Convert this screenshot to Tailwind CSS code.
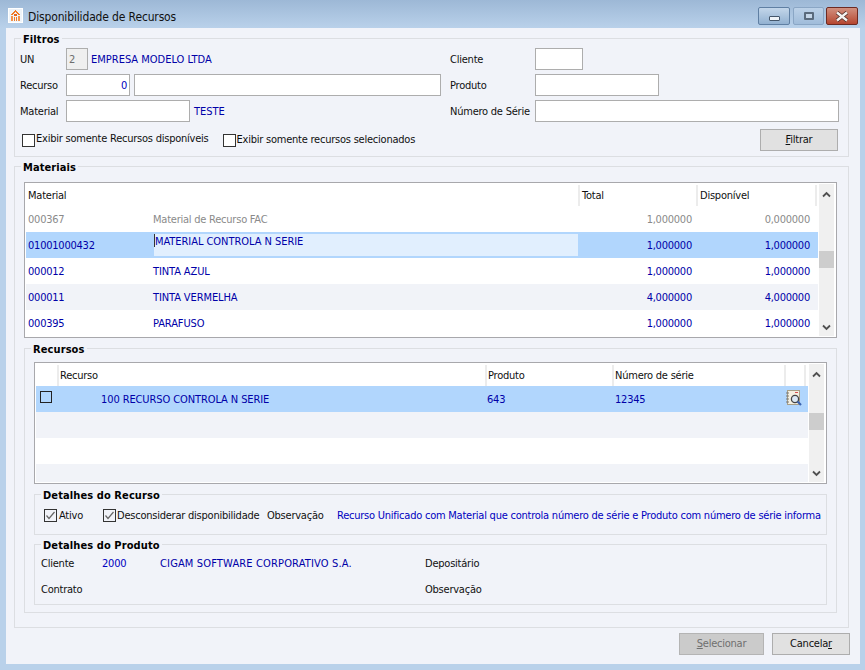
<!DOCTYPE html>
<html lang="pt-BR">
<head>
  <meta charset="UTF-8" />
  <title>Disponibilidade de Recursos</title>
  <script src="https://cdn.jsdelivr.net/npm/@tailwindcss/browser@4"></script>
</head>
<body class="bg-[#b9d1ea] overflow-hidden">
<div class="w-[865px] h-[670px] flex flex-col font-['DejaVu_Sans_Condensed','Noto_Sans',sans-serif] text-[11px] leading-[14px] tracking-[-0.23px] text-[#101010] [&_span]:translate-y-px">

  <!-- title bar -->
  <div class="h-[28px] flex items-start pl-[8px] pr-[7px] bg-gradient-to-b from-[#9db8d6] to-[#b9d1ea]">
    <div class="mt-[8px] w-[15px] h-[15px] bg-white/80 border border-white flex items-center justify-center">
      <svg width="11" height="11" viewBox="0 0 11 11" fill="#f07b26">
        <path d="M5 0h1v1h1v1h1v1h1v1h1v1h-2v-1h-1v-1h-1v-1h-1v1h-1v1h-1v1h-2v-1h1v-1h1v-1h1v-1h1z"/>
        <rect x="1" y="6" width="2" height="5" fill="#f4924a"/>
        <rect x="4" y="4" width="3" height="2" fill="#e9671a"/>
        <rect x="4" y="7" width="1" height="4"/>
        <rect x="6" y="7" width="1" height="4"/>
        <rect x="8" y="6" width="2" height="5" fill="#f4924a"/>
      </svg>
    </div>
    <span class="ml-[5px] mt-[9px] text-[12px] tracking-[-0.15px] text-[#111]">Disponibilidade de Recursos</span>
    <div class="ml-auto mt-[7px] flex">
      <div class="w-[32px] h-[18px] rounded-[2px] border border-[#5f7fa3] bg-gradient-to-b from-[#c3d6ea] to-[#92b1d1] flex items-end justify-center pb-[3px]">
        <div class="w-[11px] h-[5px] rounded-[1px] bg-[#eef3f8] border border-[#44566b]"></div>
      </div>
      <div class="ml-[3px] w-[31px] h-[18px] rounded-[2px] border border-[#8aa6c5] bg-gradient-to-b from-[#bcd1e8] to-[#a0bcda] flex items-center justify-center">
        <div class="w-[10px] h-[8px] rounded-[1px] border-2 border-[#5a6a7c] bg-[#c5d6e8]"></div>
      </div>
      <div class="ml-[2px] w-[32px] h-[18px] rounded-[2px] border border-[#6d2a22] bg-gradient-to-b from-[#d0907f] to-[#b5452f] flex items-center justify-center">
        <svg width="16" height="11" viewBox="0 0 16 11"><path d="M3 1.5 L13 9.5 M13 1.5 L3 9.5" stroke="#4c2a25" stroke-width="4"/><path d="M3 1.5 L13 9.5 M13 1.5 L3 9.5" stroke="#f4f2f0" stroke-width="2.4"/></svg>
      </div>
    </div>
  </div>

  <!-- client area -->
  <div class="ml-[6px] w-[854px] h-[636px] bg-[#f1f3f9] px-[8px]">

    <!-- Filtros -->
    <fieldset class="mt-[3px] w-[835px] h-[126px] border border-[#dcdee2] pl-[5px] pr-[9px] min-w-0">
      <legend class="ml-[1px] px-[2px] font-bold text-[11px] leading-[14px] tracking-[0.1px] text-black translate-y-[2px]">Filtros</legend>
      <div class="flex h-[109px] mt-[3px]">
        <div class="w-[430px] flex flex-col">
          <div class="flex items-center h-[22px]">
            <span class="w-[46px]">UN</span>
            <div class="w-[22px] h-[22px] border border-[#adadad] bg-[#efefef] text-[#6d6d6d] pl-[2px] leading-[21px]">2</div>
            <span class="ml-[3px] tracking-[0px] text-[#0000a8]">EMPRESA MODELO LTDA</span>
          </div>
          <div class="flex items-center h-[22px] mt-[4px]">
            <span class="w-[46px]">Recurso</span>
            <div class="w-[64px] h-[22px] border border-[#adadad] bg-white text-[#0000c0] text-right pr-[2px] leading-[21px]">0</div>
            <div class="ml-[4px] w-[307px] h-[22px] border border-[#adadad] bg-white"></div>
          </div>
          <div class="flex items-center h-[22px] mt-[4px]">
            <span class="w-[46px]">Material</span>
            <div class="w-[124px] h-[22px] border border-[#adadad] bg-white"></div>
            <span class="ml-[4px] tracking-[0px] text-[#0000a8]">TESTE</span>
          </div>
          <div class="flex items-center mt-[11px] ml-[2px]">
            <div class="w-[13px] h-[13px] border border-[#333] bg-white"></div>
            <span class="ml-px -mt-[4px]">Exibir somente Recursos disponíveis</span>
            <div class="ml-[14px] mt-px w-[13px] h-[13px] border border-[#333] bg-white"></div>
            <span class="ml-px -mt-[2px]">Exibir somente recursos selecionados</span>
          </div>
        </div>
        <div class="flex-1 flex flex-col">
          <div class="flex items-center h-[22px]">
            <span class="w-[85px]">Cliente</span>
            <div class="w-[48px] h-[22px] border border-[#adadad] bg-white"></div>
          </div>
          <div class="flex items-center h-[22px] mt-[4px]">
            <span class="w-[85px]">Produto</span>
            <div class="w-[124px] h-[22px] border border-[#adadad] bg-white"></div>
          </div>
          <div class="flex items-center h-[22px] mt-[4px]">
            <span class="w-[85px]">Número de Série</span>
            <div class="w-[304px] h-[22px] border border-[#adadad] bg-white"></div>
          </div>
          <div class="flex justify-end mt-[7px] mr-px">
            <div class="w-[78px] h-[22px] border border-[#adadad] bg-[#e1e1e1] text-center leading-[20px]"><u>F</u>iltrar</div>
          </div>
        </div>
      </div>
    </fieldset>

    <!-- Materiais -->
    <fieldset class="mt-[2px] w-[835px] h-[469px] border border-[#dcdee2] pl-[9px] pr-[11px] min-w-0">
      <legend class="ml-[-3px] px-[2px] font-bold text-[11px] leading-[14px] tracking-[0.1px] text-black translate-y-[2px]">Materiais</legend>
      <div class="mt-[9px] w-[813px] h-[156px] border border-[#a8a8ac] bg-white p-px flex">
        <div class="w-[792px] flex flex-col">
          <div class="h-[22px] flex pt-px">
            <div class="w-[554px] h-[21px] pl-[2px] leading-[22px] border-r-2 border-[#ececec]">Material</div>
            <div class="w-[118px] h-[21px] pl-[2px] leading-[22px] border-r-2 border-[#ececec]">Total</div>
            <div class="w-[119px] h-[21px] pl-[2px] leading-[22px] border-r-2 border-[#ececec]">Disponível</div>
          </div>
          <div class="h-[26px] flex items-center text-[#8a8a8a] bg-white">
            <span class="w-[127px] pl-[2px]">000367</span><span class="w-[425px]">Material de Recurso FAC</span>
            <span class="w-[114px] text-right">1,000000</span><span class="w-[118px] text-right">0,000000</span>
          </div>
          <div class="h-[26px] flex items-center text-[#0000a8] bg-[#b1d6fd]">
            <span class="w-[128px] pl-[2px]">01001000432</span>
            <div class="w-[424px] h-[22px] bg-[#e1effe] flex items-start">
              <div class="w-px h-[13px] bg-[#333]"></div>
              <span class="leading-[14px] tracking-[-0.05px]">MATERIAL CONTROLA N SERIE</span>
            </div>
            <span class="w-[114px] text-right">1,000000</span><span class="w-[118px] text-right">1,000000</span>
          </div>
          <div class="h-[26px] flex items-center text-[#0000a8] bg-white">
            <span class="w-[127px] pl-[2px]">000012</span><span class="w-[425px] tracking-[-0.1px]">TINTA AZUL</span>
            <span class="w-[114px] text-right">1,000000</span><span class="w-[118px] text-right">1,000000</span>
          </div>
          <div class="h-[26px] flex items-center text-[#0000a8] bg-[#f1f3f8]">
            <span class="w-[127px] pl-[2px]">000011</span><span class="w-[425px] tracking-[-0.1px]">TINTA VERMELHA</span>
            <span class="w-[114px] text-right">4,000000</span><span class="w-[118px] text-right">4,000000</span>
          </div>
          <div class="h-[26px] flex items-center text-[#0000a8] bg-white">
            <span class="w-[127px] pl-[2px]">000395</span><span class="w-[425px] tracking-[-0.1px]">PARAFUSO</span>
            <span class="w-[114px] text-right">1,000000</span><span class="w-[118px] text-right">1,000000</span>
          </div>
        </div>
        <div class="ml-px w-[15px] bg-[#f0f0f0] flex flex-col items-center">
          <svg class="mt-[7px]" width="9" height="7" viewBox="0 0 9 7"><path d="M1 5.5 L4.5 2 L8 5.5" fill="none" stroke="#505050" stroke-width="1.8"/></svg>
          <div class="mt-[53px] w-[15px] h-[17px] bg-[#cdcdcd]"></div>
          <svg class="mt-[56px]" width="9" height="7" viewBox="0 0 9 7"><path d="M1 1.5 L4.5 5 L8 1.5" fill="none" stroke="#505050" stroke-width="1.8"/></svg>
        </div>
      </div>

      <!-- Recursos -->
      <fieldset class="mt-[3px] w-[813px] h-[272px] border border-[#dcdee2] px-[9px] min-w-0">
        <legend class="ml-[-3px] px-[2px] font-bold text-[11px] leading-[14px] tracking-[0.1px] text-black translate-y-[2px]">Recursos</legend>
        <div class="mt-[7px] w-[793px] h-[122px] border border-[#a8a8ac] bg-white p-px flex">
          <div class="w-[772px] flex flex-col">
            <div class="h-[22px] flex pt-px">
              <div class="w-[23px] h-[21px] border-r-2 border-[#ececec]"></div>
              <div class="w-[428px] h-[21px] pl-px leading-[22px] border-r-2 border-[#ececec]">Recurso</div>
              <div class="w-[127px] h-[21px] pl-px leading-[22px] border-r-2 border-[#ececec]">Produto</div>
              <div class="w-[172px] h-[21px] pl-px leading-[22px] border-r-2 border-[#ececec]">Número de série</div>
              <div class="w-[20px] h-[21px] border-r-2 border-[#ececec]"></div>
            </div>
            <div class="h-[26px] flex items-center text-[#0000a8] bg-[#b1d6fd]">
              <div class="ml-[4px] mb-[4px] w-[12px] h-[12px] border border-[#222] bg-[#b1d6fd] shrink-0"></div>
              <span class="ml-[49px] w-[386px] tracking-[-0.1px]">100 RECURSO CONTROLA N SERIE</span>
              <span class="w-[128px]">643</span>
              <span class="w-[171px]">12345</span>
              <svg width="16" height="16" viewBox="0 0 16 16" class="shrink-0 mb-[2px]">
                <rect x="1.5" y="0.5" width="12" height="14" fill="#f4efe0" stroke="#a89f86"/>
                <path d="M0 3h3M0 6h3M0 9h3M0 12h3" stroke="#777" stroke-width="1"/>
                <rect x="9" y="2" width="3" height="1" fill="#d85050"/>
                <circle cx="9" cy="9" r="3.6" fill="#dce9f5" stroke="#444" stroke-width="1.3"/>
                <path d="M11.5 11.5 L15 15" stroke="#3a62b0" stroke-width="2.2"/>
              </svg>
            </div>
            <div class="h-[26px] bg-[#f1f3f8]"></div>
            <div class="h-[26px] bg-white"></div>
            <div class="h-[18px] bg-[#f1f3f8]"></div>
          </div>
          <div class="ml-px w-[15px] bg-[#f0f0f0] flex flex-col items-center">
            <svg class="mt-[7px]" width="9" height="7" viewBox="0 0 9 7"><path d="M1 5.5 L4.5 2 L8 5.5" fill="none" stroke="#505050" stroke-width="1.8"/></svg>
            <div class="mt-[35px] w-[15px] h-[17px] bg-[#cdcdcd]"></div>
            <svg class="mt-[40px]" width="9" height="7" viewBox="0 0 9 7"><path d="M1 1.5 L4.5 5 L8 1.5" fill="none" stroke="#505050" stroke-width="1.8"/></svg>
          </div>
        </div>

        <fieldset class="mt-[3px] w-[793px] h-[48px] border border-[#dcdee2] pl-[9px] pr-[4px] min-w-0">
          <legend class="ml-[-3px] px-[2px] font-bold text-[11px] leading-[14px] tracking-[0.1px] text-black translate-y-[2px]">Detalhes do Recurso</legend>
          <div class="flex items-center h-[20px] mt-[4px] whitespace-nowrap">
            <svg width="13" height="13" viewBox="0 0 13 13" class="shrink-0"><rect x="0.5" y="0.5" width="12" height="12" fill="#f1f3f9" stroke="#333"/><path d="M2.5 6.5 L5 9.5 L10.5 3" fill="none" stroke="#666" stroke-width="1.2"/></svg>
            <span class="ml-[2px] w-[44px] shrink-0">Ativo</span>
            <svg width="13" height="13" viewBox="0 0 13 13" class="shrink-0"><rect x="0.5" y="0.5" width="12" height="12" fill="#f1f3f9" stroke="#333"/><path d="M2.5 6.5 L5 9.5 L10.5 3" fill="none" stroke="#666" stroke-width="1.2"/></svg>
            <span class="ml-px w-[150px] shrink-0">Desconsiderar disponibilidade</span>
            <span class="w-[70px] shrink-0">Observação</span>
            <span class="text-[#0000c0]">Recurso Unificado com Material que controla número de série e Produto com número de série informa</span>
          </div>
        </fieldset>

        <fieldset class="mt-[2px] w-[793px] h-[68px] border border-[#dcdee2] pl-[6px] pr-[9px] min-w-0">
          <legend class="ml-0 px-[2px] font-bold text-[11px] leading-[14px] tracking-[0.1px] text-black translate-y-[2px]">Detalhes do Produto</legend>
          <div class="flex items-center h-[26px] -mt-px">
            <span class="w-[61px]">Cliente</span>
            <span class="w-[58px] text-[#0000c0]">2000</span>
            <span class="w-[265px] tracking-[0.15px] text-[#0000a8]">CIGAM SOFTWARE CORPORATIVO S.A.</span>
            <span>Depositário</span>
          </div>
          <div class="flex items-center h-[26px]">
            <span class="w-[384px]">Contrato</span>
            <span>Observação</span>
          </div>
        </fieldset>
      </fieldset>
    </fieldset>

    <!-- footer buttons -->
    <div class="mt-[5px] flex justify-end gap-[8px] pr-[2px]">
      <div class="w-[85px] h-[22px] border border-[#b4b4b4] bg-[#cbcbcb] text-[#6f6f6f] text-center leading-[20px]"><u>S</u>elecionar</div>
      <div class="w-[78px] h-[22px] border border-[#adadad] bg-[#e1e1e1] text-center leading-[20px]">Cancela<u>r</u></div>
    </div>
  </div>
</div>
</body>
</html>
